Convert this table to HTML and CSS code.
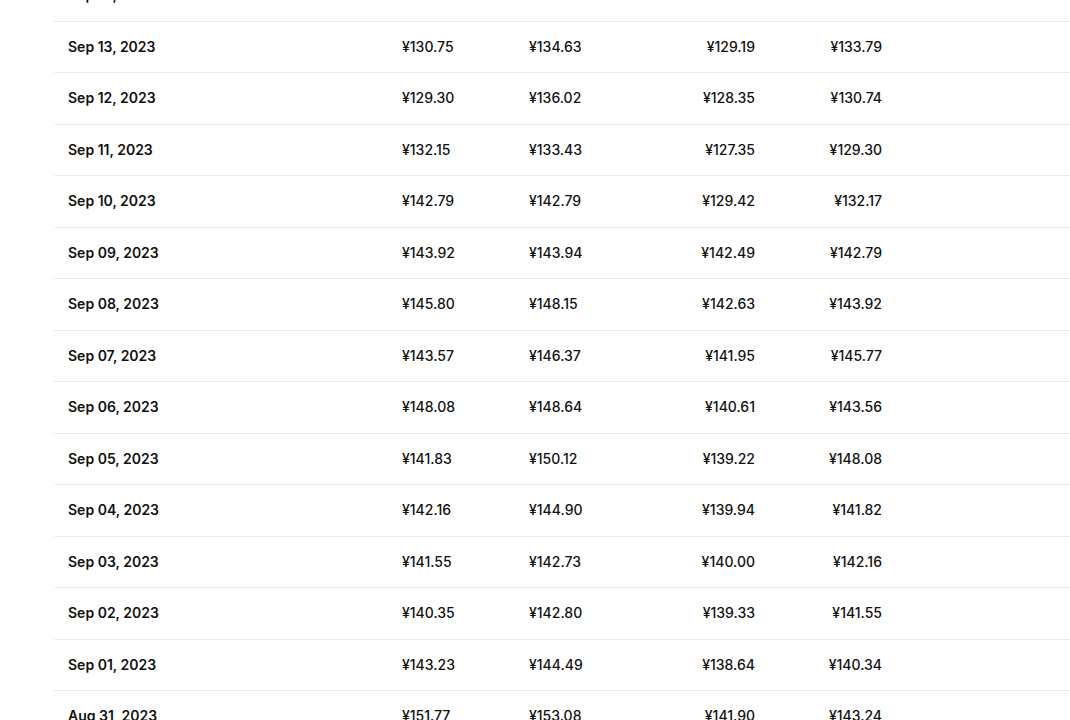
FILE: index.html
```html
<!DOCTYPE html>
<html lang="en">
<head>
<meta charset="utf-8">
<title>Historical prices</title>
<link rel="stylesheet" href="styles.css">
</head>
<body>
<div class="page">
  <table class="prices">
    <colgroup>
      <col class="c-date"><col class="c-num"><col class="c-num"><col class="c-num"><col class="c-num"><col class="c-rest">
    </colgroup>
    <tbody>
      <tr><td class="date">Sep 14, 2023</td><td class="l">¥133.80</td><td class="l">¥134.22</td><td class="r">¥130.26</td><td class="r">¥130.75</td><td></td></tr>
      <tr><td class="date">Sep 13, 2023</td><td class="l">¥130.75</td><td class="l">¥134.63</td><td class="r">¥129.19</td><td class="r">¥133.79</td><td></td></tr>
      <tr><td class="date">Sep 12, 2023</td><td class="l">¥129.30</td><td class="l">¥136.02</td><td class="r">¥128.35</td><td class="r">¥130.74</td><td></td></tr>
      <tr><td class="date">Sep 11, 2023</td><td class="l">¥132.15</td><td class="l">¥133.43</td><td class="r">¥127.35</td><td class="r">¥129.30</td><td></td></tr>
      <tr><td class="date">Sep 10, 2023</td><td class="l">¥142.79</td><td class="l">¥142.79</td><td class="r">¥129.42</td><td class="r">¥132.17</td><td></td></tr>
      <tr><td class="date">Sep 09, 2023</td><td class="l">¥143.92</td><td class="l">¥143.94</td><td class="r">¥142.49</td><td class="r">¥142.79</td><td></td></tr>
      <tr><td class="date">Sep 08, 2023</td><td class="l">¥145.80</td><td class="l">¥148.15</td><td class="r">¥142.63</td><td class="r">¥143.92</td><td></td></tr>
      <tr><td class="date">Sep 07, 2023</td><td class="l">¥143.57</td><td class="l">¥146.37</td><td class="r">¥141.95</td><td class="r">¥145.77</td><td></td></tr>
      <tr><td class="date">Sep 06, 2023</td><td class="l">¥148.08</td><td class="l">¥148.64</td><td class="r">¥140.61</td><td class="r">¥143.56</td><td></td></tr>
      <tr><td class="date">Sep 05, 2023</td><td class="l">¥141.83</td><td class="l">¥150.12</td><td class="r">¥139.22</td><td class="r">¥148.08</td><td></td></tr>
      <tr><td class="date">Sep 04, 2023</td><td class="l">¥142.16</td><td class="l">¥144.90</td><td class="r">¥139.94</td><td class="r">¥141.82</td><td></td></tr>
      <tr><td class="date">Sep 03, 2023</td><td class="l">¥141.55</td><td class="l">¥142.73</td><td class="r">¥140.00</td><td class="r">¥142.16</td><td></td></tr>
      <tr><td class="date">Sep 02, 2023</td><td class="l">¥140.35</td><td class="l">¥142.80</td><td class="r">¥139.33</td><td class="r">¥141.55</td><td></td></tr>
      <tr><td class="date">Sep 01, 2023</td><td class="l">¥143.23</td><td class="l">¥144.49</td><td class="r">¥138.64</td><td class="r">¥140.34</td><td></td></tr>
      <tr><td class="date">Aug 31, 2023</td><td class="l">¥151.77</td><td class="l">¥153.08</td><td class="r">¥141.90</td><td class="r">¥143.24</td><td></td></tr>
    </tbody>
  </table>
</div>
</body>
</html>
```
FILE: styles.css
```css
html, body {
  margin: 0;
  padding: 0;
  background: #ffffff;
  overflow: hidden;
}
body {
  font-family: Inter, "Noto Sans", "Liberation Sans", sans-serif;
  font-size: 14px;
  color: #111111;
}
.page {
  padding-left: 54px;
  margin-top: -30.5px;
}
.prices {
  border-collapse: collapse;
  table-layout: fixed;
  width: 1016px;
}
.c-date { width: 334px; }
.c-num { width: 127px; }
.c-rest { width: auto; }
.prices td {
  height: 50.5px;
  padding: 0 14px;
  box-sizing: border-box;
  border-bottom: 1px solid #ececec;
  line-height: 20px;
  white-space: nowrap;
  vertical-align: middle;
  font-weight: 500;
}
.prices tr {
  height: 51.5px;
}
.prices td.date {
  font-weight: 600;
}
.prices td.l { text-align: left; }
.prices td.r { text-align: right; }
```
